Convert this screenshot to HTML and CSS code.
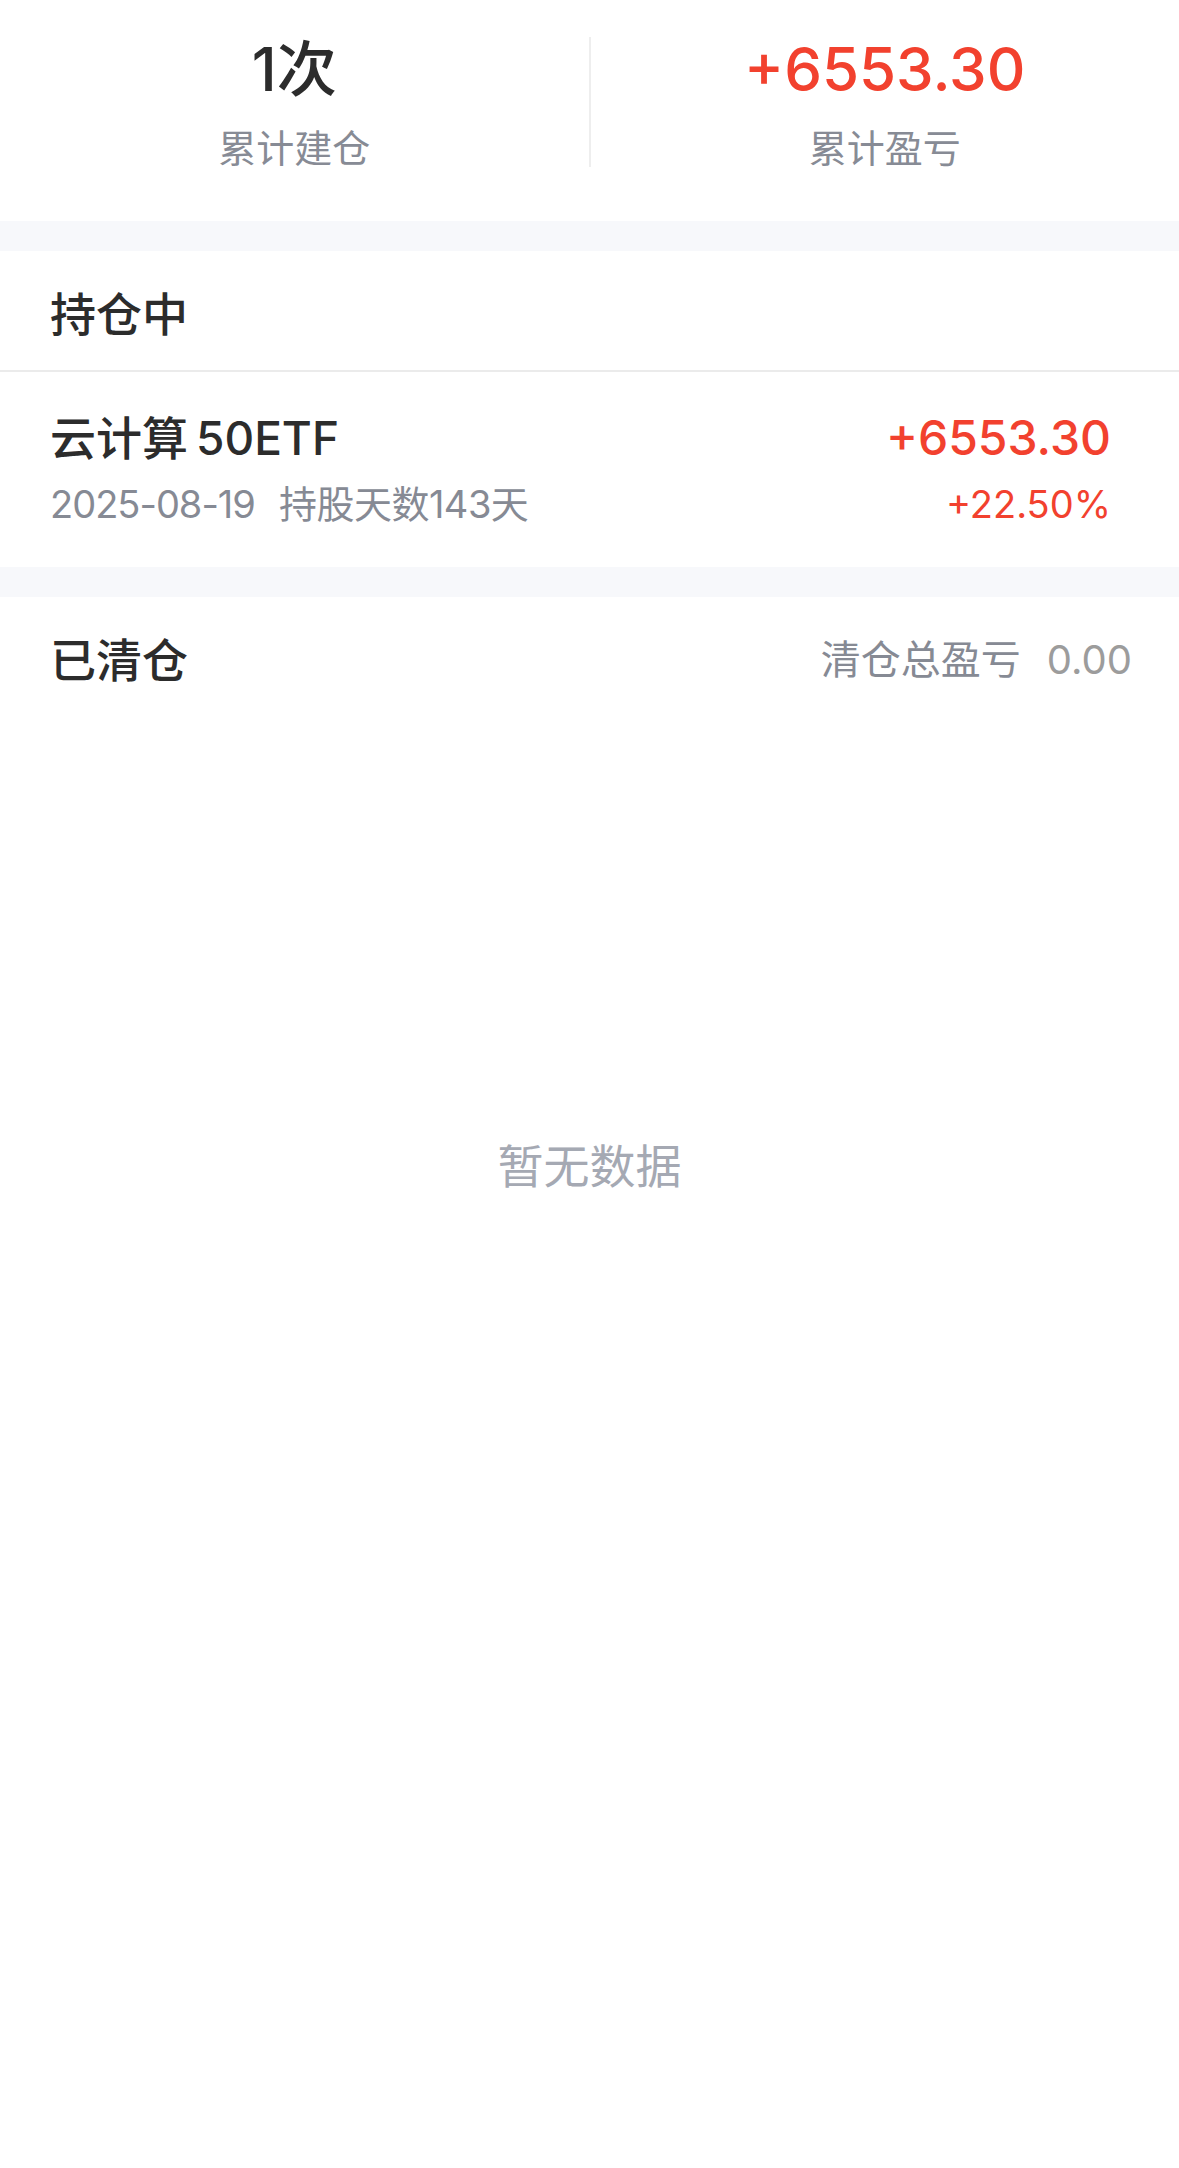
FILE: index.html
```html
<!DOCTYPE html>
<html lang="zh-CN">
<head>
<meta charset="utf-8">
<title>持仓记录</title>
<link rel="stylesheet" href="styles.css">
</head>
<body>

    <div class="summary">
        <div class="stat">
            <div class="stat-value">1次</div>
            <div class="stat-label">累计建仓</div>
        </div>
        <div class="stat stat-split">
            <div class="stat-value up">+6553.30</div>
            <div class="stat-label">累计盈亏</div>
        </div>
    </div>

    <div class="band"></div>

    <div class="section-head bordered">
        <span class="section-title">持仓中</span>
    </div>

    <div class="holding">
        <div class="holding-left">
            <div class="holding-name">云计算<span class="holding-code">50ETF</span></div>
            <div class="holding-meta">
                <span class="holding-date">2025-08-19</span><span class="holding-days">持股天数143天</span>
            </div>
        </div>
        <div class="holding-right">
            <div class="holding-profit up">+6553.30</div>
            <div class="holding-rate up">+22.50%</div>
        </div>
    </div>

    <div class="band"></div>

    <div class="section-head">
        <span class="section-title">已清仓</span>
        <span class="closed-total">清仓总盈亏<span class="closed-value">0.00</span></span>
    </div>

    <div class="empty">暂无数据</div>

</body>
</html>
```

FILE: styles.css
```css
body {
    margin: 0;
    background-color: white;
    color: #2c2c2c;
    font-family: "Inter", "Noto Sans CJK SC", sans-serif;
}

.up {
    color: #f2412e;
}

.summary {
    display: flex;
    height: 221px;
    padding-top: 37px;
    box-sizing: border-box;
}

.stat {
    flex: 1;
    height: 130px;
    text-align: center;
}

.stat-split {
    border-left: 2px solid #eeeeee;
}

.stat-value {
    font-size: 60px;
    font-weight: 500;
    line-height: 60px;
    margin-top: 2px;
}

.stat-label {
    color: #878b95;
    font-size: 38px;
    line-height: 38px;
    margin-top: 30px;
}

.band {
    height: 30px;
    background-color: #f7f8fb;
}

.section-head {
    display: flex;
    align-items: center;
    justify-content: space-between;
    height: 119px;
    padding: 0 47px 0 50px;
}

.section-head.bordered {
    border-bottom: 2px solid #ebebeb;
}

.section-title {
    font-size: 46px;
    font-weight: 500;
}

.closed-total {
    color: #868a94;
    font-size: 40px;
}

.closed-value {
    color: #9c9c9c;
    margin-left: 26px;
}

.holding {
    display: flex;
    justify-content: space-between;
    height: 195px;
    padding: 38px 68px 0 50px;
    box-sizing: border-box;
}

.holding-name {
    font-size: 46px;
    font-weight: 500;
    line-height: 56px;
}

.holding-code {
    margin-left: 8px;
}

.holding-meta {
    color: #868a94;
    font-size: 38px;
    line-height: 44px;
    margin-top: 16px;
}

.holding-date {
    letter-spacing: -1px;
}

.holding-days {
    margin-left: 24px;
    letter-spacing: -0.5px;
}

.holding-right {
    text-align: right;
}

.holding-profit {
    font-size: 48px;
    font-weight: 500;
    line-height: 56px;
}

.holding-rate {
    font-size: 38px;
    line-height: 44px;
    margin-top: 16px;
}

.empty {
    color: #a5a9b3;
    font-size: 46px;
    line-height: 56px;
    padding-top: 422px;
    text-align: center;
}
```
